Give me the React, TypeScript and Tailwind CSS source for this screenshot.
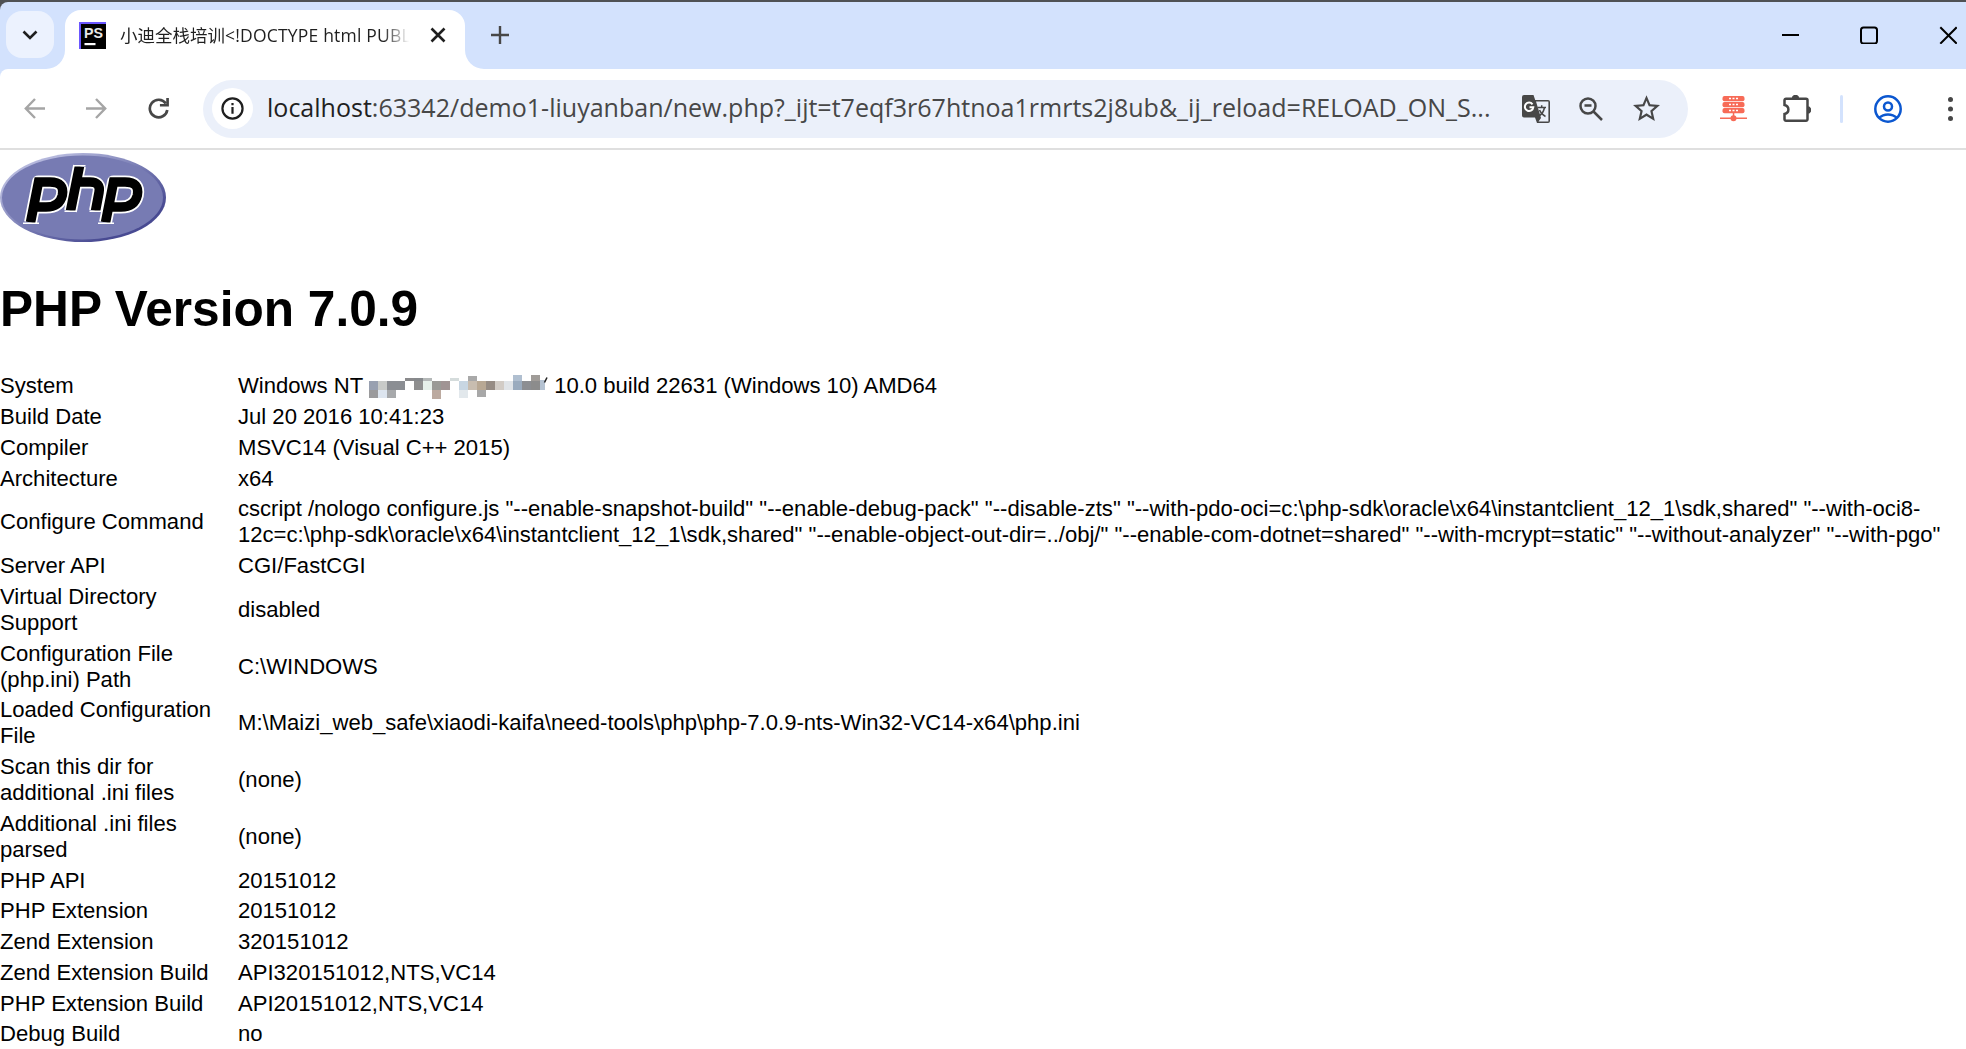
import { clsx } from "clsx";
import type { ReactNode } from "react";

interface InfoRow {
  label: string[];
  value: ReactNode;
}

// [x, y, width, height, fill]
type Block = [number, number, number, number, string];

const HOST_BLOCKS: Block[] = [
  [0, 7, 9, 10, "#98a0b0"],
  [9, 7, 9, 10, "#c8cac8"],
  [18, 7, 18, 9, "#8b8e93"],
  [0, 16, 9, 8, "#9a9a9c"],
  [9, 16, 9, 8, "#dde5ef"],
  [18, 16, 9, 8, "#a7a9ab"],
  [36, 4, 9, 3, "#8a8a8c"],
  [45, 4, 9, 3, "#86898c"],
  [54, 4, 9, 3, "#b4b8b8"],
  [45, 7, 9, 9, "#8f8f8f"],
  [54, 7, 9, 9, "#e6f0ea"],
  [63, 7, 9, 9, "#9a9a96"],
  [63, 16, 9, 9, "#bcaaa0"],
  [72, 7, 9, 9, "#a09494"],
  [81, 4, 9, 3, "#d5dcdc"],
  [90, 7, 9, 9, "#c8d6e2"],
  [90, 16, 9, 8, "#e2e8ec"],
  [99, 2, 9, 5, "#a9a9a9"],
  [99, 7, 9, 9, "#c8bdb0"],
  [108, 7, 9, 9, "#b8a894"],
  [108, 16, 9, 7, "#a8a8a8"],
  [117, 7, 9, 9, "#968c84"],
  [126, 7, 9, 9, "#d2ccc6"],
  [135, 7, 9, 9, "#e0e4e8"],
  [144, 1, 9, 6, "#b0bfd0"],
  [144, 7, 9, 9, "#9aabbe"],
  [153, 7, 9, 9, "#8c8e92"],
  [162, 1, 9, 6, "#a09c98"],
  [162, 7, 9, 9, "#8c8c8c"],
  [171, 6, 5, 10, "#b4c2d2"],
];

function MaskedHost() {
  return (
    <svg className="ml-1.5 mr-[6px] inline-block h-[25px] w-[179px] align-[-6px]" viewBox="0 0 179 25">
      {HOST_BLOCKS.map(([x, y, w, h, fill]) => (
        <rect key={`${x}-${y}`} x={x} y={y} width={w} height={h} fill={fill} />
      ))}
      <path d="M175.500 8.500l2.500-5" stroke="#222" strokeWidth="1.600" />
    </svg>
  );
}

const ROWS: InfoRow[] = [
  {
    label: ["System"],
    value: (
      <>
        Windows NT
        <MaskedHost />
        10.0 build 22631 (Windows 10) AMD64
      </>
    ),
  },
  { label: ["Build Date"], value: "Jul 20 2016 10:41:23" },
  { label: ["Compiler"], value: "MSVC14 (Visual C++ 2015)" },
  { label: ["Architecture"], value: "x64" },
  {
    label: ["Configure Command"],
    value: (
      <>
        {'cscript /nologo configure.js "--enable-snapshot-build" "--enable-debug-pack" "--disable-zts" "--with-pdo-oci=c:\\php-sdk\\oracle\\x64\\instantclient_12_1\\sdk,shared" "--with-oci8-'}
        <br />
        {'12c=c:\\php-sdk\\oracle\\x64\\instantclient_12_1\\sdk,shared" "--enable-object-out-dir=../obj/" "--enable-com-dotnet=shared" "--with-mcrypt=static" "--without-analyzer" "--with-pgo"'}
      </>
    ),
  },
  { label: ["Server API"], value: "CGI/FastCGI" },
  { label: ["Virtual Directory", "Support"], value: "disabled" },
  { label: ["Configuration File", "(php.ini) Path"], value: "C:\\WINDOWS" },
  {
    label: ["Loaded Configuration", "File"],
    value: "M:\\Maizi_web_safe\\xiaodi-kaifa\\need-tools\\php\\php-7.0.9-nts-Win32-VC14-x64\\php.ini",
  },
  { label: ["Scan this dir for", "additional .ini files"], value: "(none)" },
  { label: ["Additional .ini files", "parsed"], value: "(none)" },
  { label: ["PHP API"], value: "20151012" },
  { label: ["PHP Extension"], value: "20151012" },
  { label: ["Zend Extension"], value: "320151012" },
  { label: ["Zend Extension Build"], value: "API320151012,NTS,VC14" },
  { label: ["PHP Extension Build"], value: "API20151012,NTS,VC14" },
  { label: ["Debug Build"], value: "no" },
];

function PhpStormIcon() {
  return (
    <svg className="size-[27px] shrink-0" viewBox="0 0 27 27">
      <rect width="27" height="27" fill="#6b57ff" />
      <rect x="2" y="2" width="25" height="25" fill="#000" />
      <text
        x="5"
        y="16"
        fontSize="14"
        fontWeight="700"
        fill="#e8e8e8"
        textLength="19"
        lengthAdjust="spacingAndGlyphs"
        className="font-['Liberation_Sans',sans-serif]"
      >
        PS
      </text>
      <rect x="5.500" y="21" width="11" height="2.200" fill="#fff" />
    </svg>
  );
}

function TabStrip() {
  return (
    <div className="flex h-[67px] rounded-tl-lg bg-[#d3e2fd]">
      <button className="ml-1.5 mt-[9px] flex h-[47px] w-12 shrink-0 items-center justify-center rounded-2xl bg-[#ecf2fe]">
        <svg className="size-6" viewBox="0 0 24 24" fill="none" stroke="#1f1f1f" strokeWidth="2.600">
          <path d="M5.500 8.500l6.500 6.500 6.500-6.500" />
        </svg>
      </button>
      <svg className="h-[19px] w-[11px] shrink-0 self-end" viewBox="0 0 11 19" overflow="visible">
        <path d="M-8 19a19 19 0 0 0 19-19v19z" fill="#fff" />
      </svg>
      <div className="mt-2 flex w-[400px] shrink-0 items-center rounded-t-2xl bg-white pb-[9px] pl-[14px] pr-[19px]">
        <PhpStormIcon />
        <div className="ml-[14px] w-[292px] whitespace-nowrap bg-linear-to-r from-[#1f1f1f] from-90% to-transparent to-99% bg-clip-text font-['Open_Sans','Noto_Sans_CJK_SC',sans-serif] text-[17.5px] leading-7 text-transparent">
          小迪全栈培训<span className="tracking-[0.2px]">&lt;!DOCTYPE html PUBL</span>
        </div>
        <svg className="ml-auto size-4 shrink-0" viewBox="0 0 16 16" stroke="#1f1f1f" strokeWidth="2.600">
          <path d="M1.500 1.500l13 13M14.500 1.500l-13 13" />
        </svg>
      </div>
      <svg className="size-[19px] shrink-0 self-end" viewBox="0 0 19 19">
        <path d="M0 0a19 19 0 0 0 19 19H0z" fill="#fff" />
      </svg>
      <svg className="ml-[7px] mt-6 size-[18px] shrink-0" viewBox="0 0 18 18" stroke="#474747" strokeWidth="2.400">
        <path d="M9 0v18M0 9h18" />
      </svg>
      <div className="ml-auto mt-6 flex gap-[61px] pr-[9px]">
        <svg className="size-[18px]" viewBox="0 0 18 18" stroke="#000" strokeWidth="2">
          <path d="M1 9h17" />
        </svg>
        <svg className="size-[18px]" viewBox="0 0 18 18" fill="none" stroke="#000" strokeWidth="2">
          <rect x="1" y="1.500" width="16" height="16" rx="2.500" />
        </svg>
        <svg className="size-[18px]" viewBox="0 0 18 18" stroke="#000" strokeWidth="2">
          <path d="M1.300 1.300l16.400 16.400M17.700 1.300L1.300 17.700" />
        </svg>
      </div>
    </div>
  );
}

function ArrowIcon({ flip = false }: { flip?: boolean }) {
  return (
    <svg
      className={clsx("size-[21px] shrink-0", flip && "-scale-x-100")}
      viewBox="0 0 21 21"
      fill="none"
      stroke="#a5a5a5"
      strokeWidth="2.400"
    >
      <path d="M11 1L1.800 10.500 11 20M2 10.500h19" />
    </svg>
  );
}

function Toolbar() {
  return (
    <div className="bg-[#d3e2fd]">
      <div className="flex h-[81px] items-center rounded-tl-lg border-b-2 border-[#dfdfdf] bg-white pl-6">
        <ArrowIcon />
        <span className="w-[41px]" />
        <ArrowIcon flip />
        <svg className="ml-[41px] size-[21px] shrink-0" viewBox="0 0 22 22" fill="none" stroke="#474747" strokeWidth="2.800">
          <path d="M18.700 5.800A9.200 9.200 0 1 0 20.200 12.500" />
          <path d="M20.500 0v7.600h-8" />
        </svg>
        <div className="ml-[34px] flex h-[58px] w-[1485px] shrink-0 items-center rounded-full bg-[#ebf0fa] pl-[9px]">
          <span className="flex size-[41px] shrink-0 items-center justify-center rounded-full bg-white">
            <svg className="size-[23px]" viewBox="0 0 24 24" fill="none" stroke="#1f1f1f" strokeWidth="2.300">
              <circle cx="12" cy="12" r="10.500" />
              <path d="M12 10.500v7M12 6.200v2.500" />
            </svg>
          </span>
          <span className="ml-[14px] w-[1225px] whitespace-nowrap pb-[3px] font-['Open_Sans','Noto_Sans',sans-serif] text-[25.04px] leading-9 text-[#474747]">
            <span className="text-[#1f1f1f]">localhost</span>
            :63342/demo1-liuyanban/new.php?_ijt=t7eqf3r67htnoa1rmrts2j8ub&amp;_ij_reload=RELOAD_ON_S...
          </span>
          <svg className="ml-[30px] size-7 shrink-0" viewBox="0 0 28 28">
            <path
              d="M2 0h9.500l1.700 5H26a2 2 0 0 1 2 2v19a2 2 0 0 1-2 2H15l-2-5.500H2a2 2 0 0 1-2-2V2a2 2 0 0 1 2-2z"
              fill="#474747"
            />
            <path d="M14 6.600H26.400v19.800H16.500l2.500-3.400z" fill="#ebf0fa" />
            <path d="M10.500 9.300A4.200 4.200 0 1 0 11.300 12.200H7.500" fill="none" stroke="#fff" strokeWidth="2" />
            <path
              d="M15.500 12.500H24M19.700 10.300v2.200M22.500 12.500c-.8 4-3 7-5.500 8.500M17.500 15c1 2.500 3 5 6 6.500"
              fill="none"
              stroke="#474747"
              strokeWidth="1.500"
            />
          </svg>
          <svg className="ml-[29px] size-6 shrink-0" viewBox="0 0 24 24" fill="none" stroke="#474747" strokeWidth="2.500">
            <circle cx="9" cy="9" r="7.500" />
            <path d="M14.500 14.500l8.500 8.500M5.500 8.500h7" />
          </svg>
          <svg className="ml-[30px] size-[27px] shrink-0" viewBox="2 1.8 20 20" fill="#474747">
            <path d="M22 9.240l-7.190-.620L12 2 9.190 8.630 2 9.240l5.460 4.730L5.820 21 12 17.270 18.180 21l-1.630-7.030L22 9.240zM12 15.400l-3.760 2.270 1-4.280-3.320-2.880 4.380-.380L12 6.100l1.710 4.040 4.380.380-3.320 2.880 1 4.280L12 15.400z" />
          </svg>
        </div>
        <svg className="ml-8 size-[27px] shrink-0" viewBox="0 0 27 27" fill="#f76b57">
          <rect x="2.500" y="1" width="22" height="5.200" rx="2" />
          <rect x="2.500" y="7" width="22" height="5.200" rx="2" />
          <rect x="2.500" y="13" width="22" height="5.200" rx="2" />
          <path d="M12.800 18h1.500v4h-1.500zM0 22.500h27v1.500H0z" />
          <circle cx="13.500" cy="23.300" r="3" />
          <path d="M9 3.500h9M9 9.500h9M9 15.500h9" stroke="#fff" strokeWidth="1.500" strokeDasharray="2 1.500" />
        </svg>
        <svg className="ml-9 size-7 shrink-0" viewBox="0 0 28 28" fill="none" stroke="#474747" strokeWidth="2.500">
          <path d="M3 3.700h20a1.500 1.500 0 0 1 1.500 1.500v19a1.500 1.500 0 0 1-1.500 1.500H3a1.500 1.500 0 0 1-1.500-1.500v-5.200c5.200-1.200 5.200-7.800 0-9V5.200A1.500 1.500 0 0 1 3 3.700z" />
          <path d="M8.800 3.500a3.700 3.700 0 0 1 7.400 0zM24.500 11.300a3.700 3.700 0 0 1 0 7.400z" fill="#474747" stroke="none" />
        </svg>
        <span className="ml-[29px] h-7 w-[3px] shrink-0 rounded-full bg-[#d3e2fd]" />
        <svg className="ml-[31px] size-7 shrink-0" viewBox="0 0 28 28" fill="none" stroke="#0b57d0" strokeWidth="2.500">
          <circle cx="14" cy="14" r="12.700" />
          <circle cx="14" cy="11.500" r="4" />
          <path d="M5 23c5-4.700 13-4.700 18 0" />
        </svg>
        <svg className="ml-[46px] h-6 w-[5px] shrink-0" viewBox="0 0 5 24" fill="#474747">
          <circle cx="2.500" cy="2.500" r="2.500" />
          <circle cx="2.500" cy="12" r="2.500" />
          <circle cx="2.500" cy="21.500" r="2.500" />
        </svg>
      </div>
    </div>
  );
}

const LOGO_STROKES = [
  "M30.500 69.500L38.500 29H50q15 0 12.300 13.500Q59.500 54 46 54H34",
  "M79.500 13L70.500 58M76 29H90q11 0 9 10.500L95.500 58",
  "M105.500 69.500L113.500 29H125q15 0 12.300 13.500Q134.500 54 121 54H109",
];

function PhpLogo() {
  return (
    <svg className="h-[89px] w-[166px]" viewBox="0 0 166 89">
      <defs>
        <linearGradient id="rim" x1="0" y1="0" x2="1" y2="1">
          <stop offset="0.200" stopColor="#b4b7dc" />
          <stop offset="0.500" stopColor="#777bb3" />
          <stop offset="0.800" stopColor="#484a92" />
        </linearGradient>
      </defs>
      <ellipse cx="83" cy="44.500" rx="83" ry="44.500" fill="url(#rim)" />
      <ellipse cx="82.500" cy="44.500" rx="80.500" ry="42" fill="#777bb3" />
      <g fill="none" stroke="#fff" strokeWidth="13" strokeLinejoin="round">
        {LOGO_STROKES.map((d) => (
          <path key={d} d={d} />
        ))}
      </g>
      <g fill="none" stroke="#000" strokeWidth="9.500">
        {LOGO_STROKES.map((d) => (
          <path key={d} d={d} />
        ))}
      </g>
      <path d="M23 70.200h16M98 70.200h16M64.500 58.300h12M89.500 58.300h12M73.500 12.700h12" stroke="#fff" strokeWidth="1.500" />
    </svg>
  );
}

function InfoTable({ rows }: { rows: InfoRow[] }) {
  return (
    <div className="mt-[33px] text-[22.08px] leading-[26px]">
      {rows.map((row) => (
        <div key={row.label[0]} className="grid grid-cols-[238px_1fr] items-center whitespace-nowrap py-[2.375px]">
          <div>
            {row.label.map((line) => (
              <div key={line}>{line}</div>
            ))}
          </div>
          <div>{row.value}</div>
        </div>
      ))}
    </div>
  );
}

export default function App() {
  return (
    <div className="h-[1049px] w-[1966px] overflow-hidden bg-white font-['Liberation_Sans',Arial,sans-serif] text-black">
      <div className="bg-[#4f5154] pt-0.5">
        <TabStrip />
      </div>
      <Toolbar />
      <main className="pt-[3px]">
        <PhpLogo />
        <h1 className="mt-[39px] text-[49.6px] font-bold leading-[57px]">PHP Version 7.0.9</h1>
        <InfoTable rows={ROWS} />
      </main>
    </div>
  );
}
